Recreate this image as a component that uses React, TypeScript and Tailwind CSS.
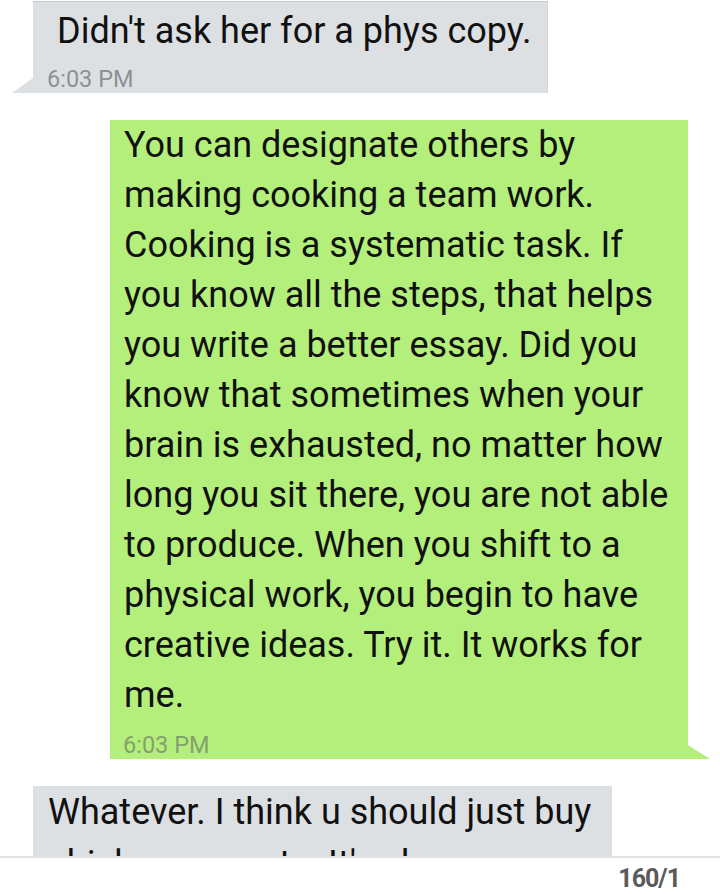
import React from 'react';

const font = { fontFamily: 'Roboto, "Noto Sans", sans-serif' };

const sentLines = [
  'You can designate others by',
  'making cooking a team work.',
  'Cooking is a systematic task. If',
  'you know all the steps, that helps',
  'you write a better essay. Did you',
  'know that sometimes when your',
  'brain is exhausted, no matter how',
  'long you sit there, you are not able',
  'to produce. When you shift to a',
  'physical work, you begin to have',
  'creative ideas. Try it. It works for',
  'me.',
];

function TailLeft({ color }: { color: string }) {
  return (
    <svg className="absolute bottom-0 left-[-21px]" width="21" height="15" viewBox="0 0 21 15">
      <polygon points="0,15 21,0 21,15" fill={color} />
    </svg>
  );
}

function TailRight({ color }: { color: string }) {
  return (
    <svg className="absolute bottom-0 right-[-22px]" width="22" height="14" viewBox="0 0 22 14">
      <polygon points="0,0 22,14 0,14" fill={color} />
    </svg>
  );
}

export default function App() {
  return (
    <div style={font} className="w-[720px] h-[894px] bg-white flex flex-col overflow-hidden">
      {/* received */}
      <div className="relative ml-[33px] mt-[1px] w-[515px] h-[92px] bg-[#dde0e3] border-t border-[#c3cacd] border-r border-r-[#d0d5d8]">
        <div className="pl-[24px] pt-[9px] text-[36px] leading-[40px] text-[#111] whitespace-nowrap">Didn't ask her for a phys copy.</div>
        <div className="pl-[14px] pt-[14px] text-[23.5px] leading-[28px] text-[#8d9194]">6:03 PM</div>
        <TailLeft color="#dde0e3" />
      </div>

      {/* sent */}
      <div className="relative ml-[110px] mt-[27px] w-[578px] h-[639px] bg-[#b5ef7b]">
        <div className="pl-[14px] text-[36px] leading-[50px] text-[#111] whitespace-nowrap">
          {sentLines.map((l, i) => (
            <div key={i}>{l}</div>
          ))}
        </div>
        <div className="pl-[13px] mt-[11px] text-[23.5px] leading-[28px] text-[#84a06f]">6:03 PM</div>
        <TailRight color="#b5ef7b" />
      </div>

      {/* received, cut off by the input bar */}
      <div className="ml-[33px] mt-[27px] w-[579px] h-[71px] bg-[#dde0e3] overflow-hidden">
        <div className="pl-[15px] text-[36px] leading-[52px] text-[#111] whitespace-nowrap">
          <div>Whatever. I think u should just buy</div>
          <div>chicken nuggets. It's cheaper</div>
        </div>
      </div>

      {/* footer */}
      <div className="border-t-2 border-[#e2e2e2] flex-1 flex justify-end pr-[40px] pt-[6px]">
        <span className="text-[25px] leading-[30px] font-bold text-[#5a5a5a] tracking-[-1px]">160/1</span>
      </div>
    </div>
  );
}
